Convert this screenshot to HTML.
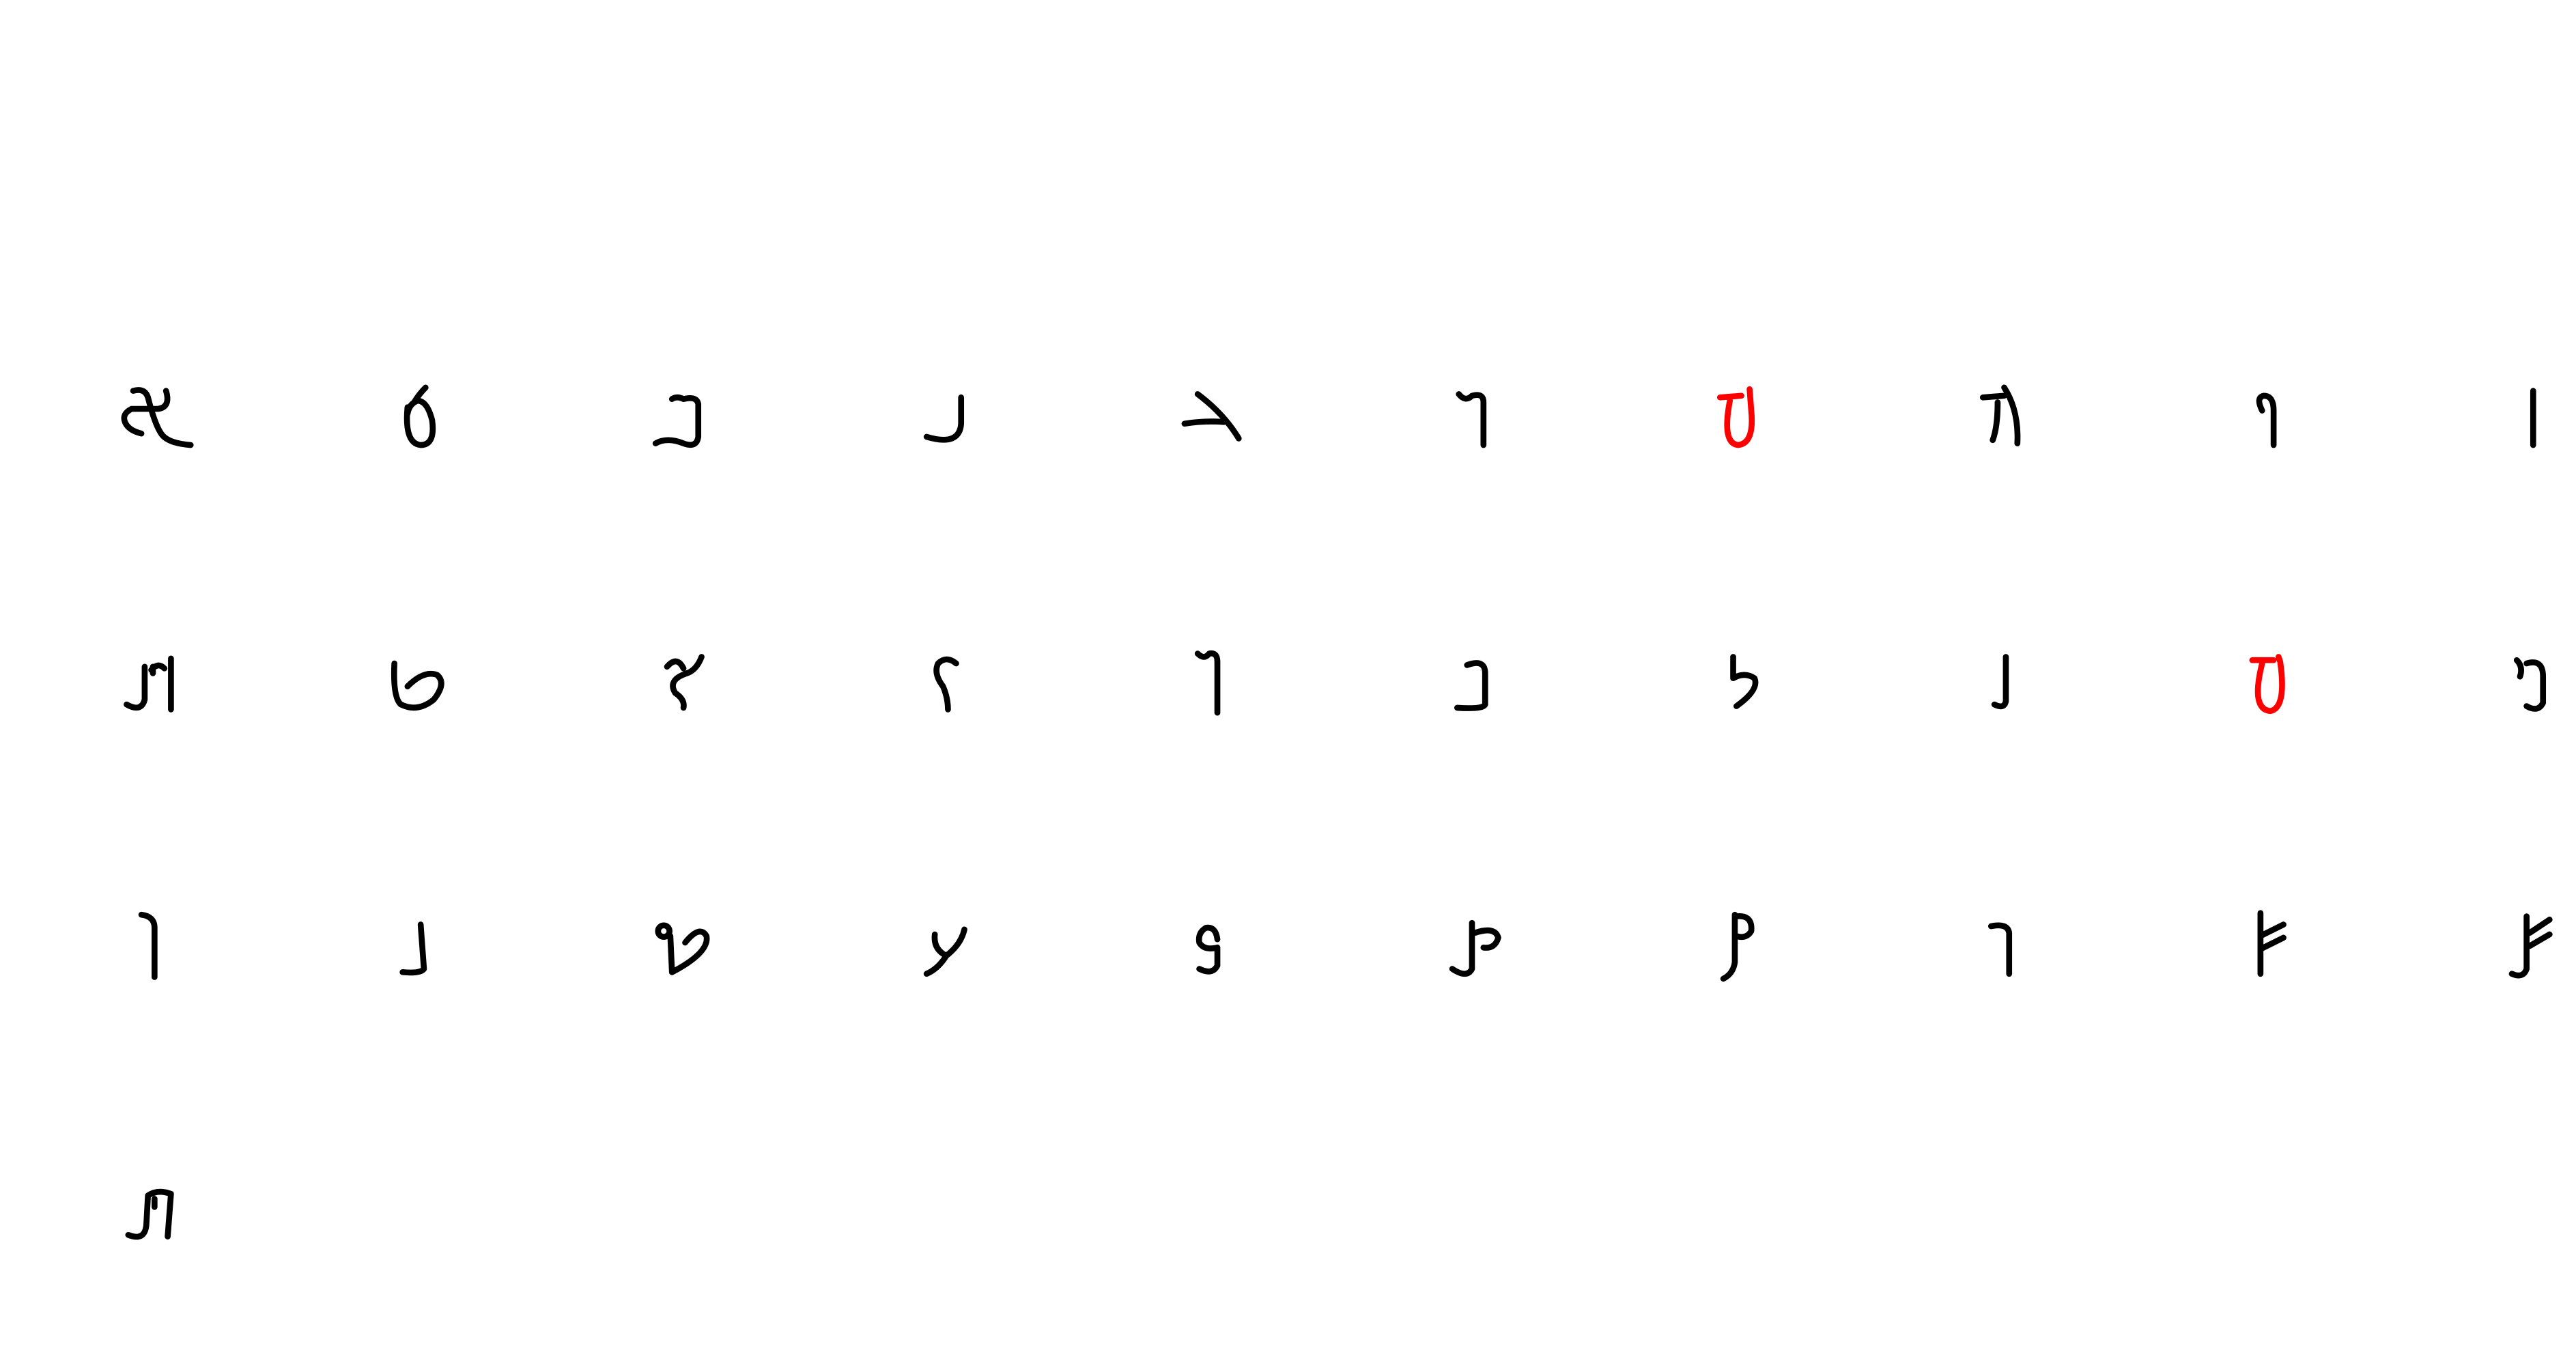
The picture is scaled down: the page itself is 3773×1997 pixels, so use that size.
<!DOCTYPE html>
<html><head><meta charset="utf-8"><style>
html,body{margin:0;padding:0;background:#fff;width:3773px;height:1997px;overflow:hidden}
svg{display:block}
path,circle{fill:none;stroke:#000;stroke-width:3.6;stroke-linecap:round;stroke-linejoin:round}
.r path{stroke:#f00}
</style></head><body>
<svg width="3773" height="1997" viewBox="0 0 1568 830" xmlns="http://www.w3.org/2000/svg">
<!-- row 1 -->
<path d="M81 238 Q88 236 90 242 Q94 258 98 264 Q102 270 116 271"/>
<path d="M101 238 Q104 248 96 249 L80 249 Q74 252 76 257 Q78 262 86 264"/>
<path d="M248 248 Q246 270 256 271 Q265 271 263 256 Q260 244 254 244 Q249 246 248 252 M252 245 Q255 240 259 236"/>
<path d="M409 243 Q412 241 416 243 Q424 241 425 246 L425 266 Q424 273 416 270 Q406 266 399 270"/>
<path d="M585 242 L585 258 Q584 272 564 266"/>
<path d="M729 240 Q745 252 754 267 M721 258 Q733 256 745 257"/>
<path d="M888 240 Q892 245 896 241 Q903 239 903 245 L903 271"/>
<g class="r"><path d="M1047 242 L1060 241 M1053 244 Q1048 270 1058 271 Q1068 270 1066 250 L1065 237"/></g>
<path d="M1207 242 L1220 241 M1216 245 Q1216 260 1213 268 M1220 236 Q1229 250 1228 270"/>
<path d="M1377 250 Q1373 242 1378 241 Q1384 241 1384 250 L1384 271"/>
<path d="M1542 238 L1542 271"/>
<!-- row 2 -->
<path d="M77 429 Q86 434 88 426 L88 406 M92 408 Q96 403 100 407 M104 401 L104 432 M93 406 L93 410"/>
<path d="M240 404 Q239 425 244 429 Q254 434 264 426 Q272 416 266 411 Q258 408 248 418"/>
<path d="M406 406 Q412 399 416 407 M427 400 Q424 408 418 410 Q406 414 411 422 Q417 426 416 431"/>
<path d="M582 404 Q576 399 571 404 Q568 410 574 418 Q577 425 577 432"/>
<path d="M729 398 Q733 402 736 398 Q741 397 741 403 L741 434"/>
<path d="M893 405 Q904 401 904 410 L904 429 Q903 432 887 431"/>
<path d="M1055 400 L1055 413 Q1062 409 1068 413 Q1071 420 1057 430"/>
<path d="M1221 400 L1221 427 Q1220 432 1214 429"/>
<g class="r"><path d="M1371 402 L1384 402 M1377 404 Q1370 432 1382 433 Q1392 431 1388 403 L1387 400"/></g>
<path d="M1532 402 Q1536 406 1534 412 M1538 404 Q1548 401 1548 412 L1548 428 Q1545 434 1538 430"/>
<!-- row 3 -->
<path d="M86 557 Q94 558 94 565 L94 595"/>
<path d="M256 563 L258 590 Q256 593 245 592"/>
<circle cx="404" cy="567" r="3.5"/>
<path d="M408 570 L409 592 Q432 580 430 570 Q426 563 417 574"/>
<path d="M569 569 Q568 578 576 582 Q585 575 587 566 M576 582 Q571 590 564 593"/>
<path d="M741 572 Q740 564 734 565 Q729 568 730 574 Q733 579 741 577 L741 588 Q738 594 730 590"/>
<path d="M896 562 L896 590 Q893 596 884 590 M898 568 Q910 564 912 571 Q910 578 903 577"/>
<path d="M1056 557 L1056 586 Q1055 593 1049 596 M1057 558 Q1067 557 1066 567 Q1063 572 1057 570"/>
<path d="M1212 564 Q1222 562 1223 568 L1223 593"/>
<path d="M1376 556 L1376 593 M1376 570 L1390 563 M1376 578 L1390 571"/>
<path d="M1538 558 L1538 590 Q1536 596 1529 593 M1540 568 L1552 560 M1540 576 L1552 569"/>
<!-- row 4 -->
<path d="M78 752 Q88 756 89 746 L90 728 Q96 724 104 727 L102 753 M94 730 L94 735"/>
</svg>
</body></html>
